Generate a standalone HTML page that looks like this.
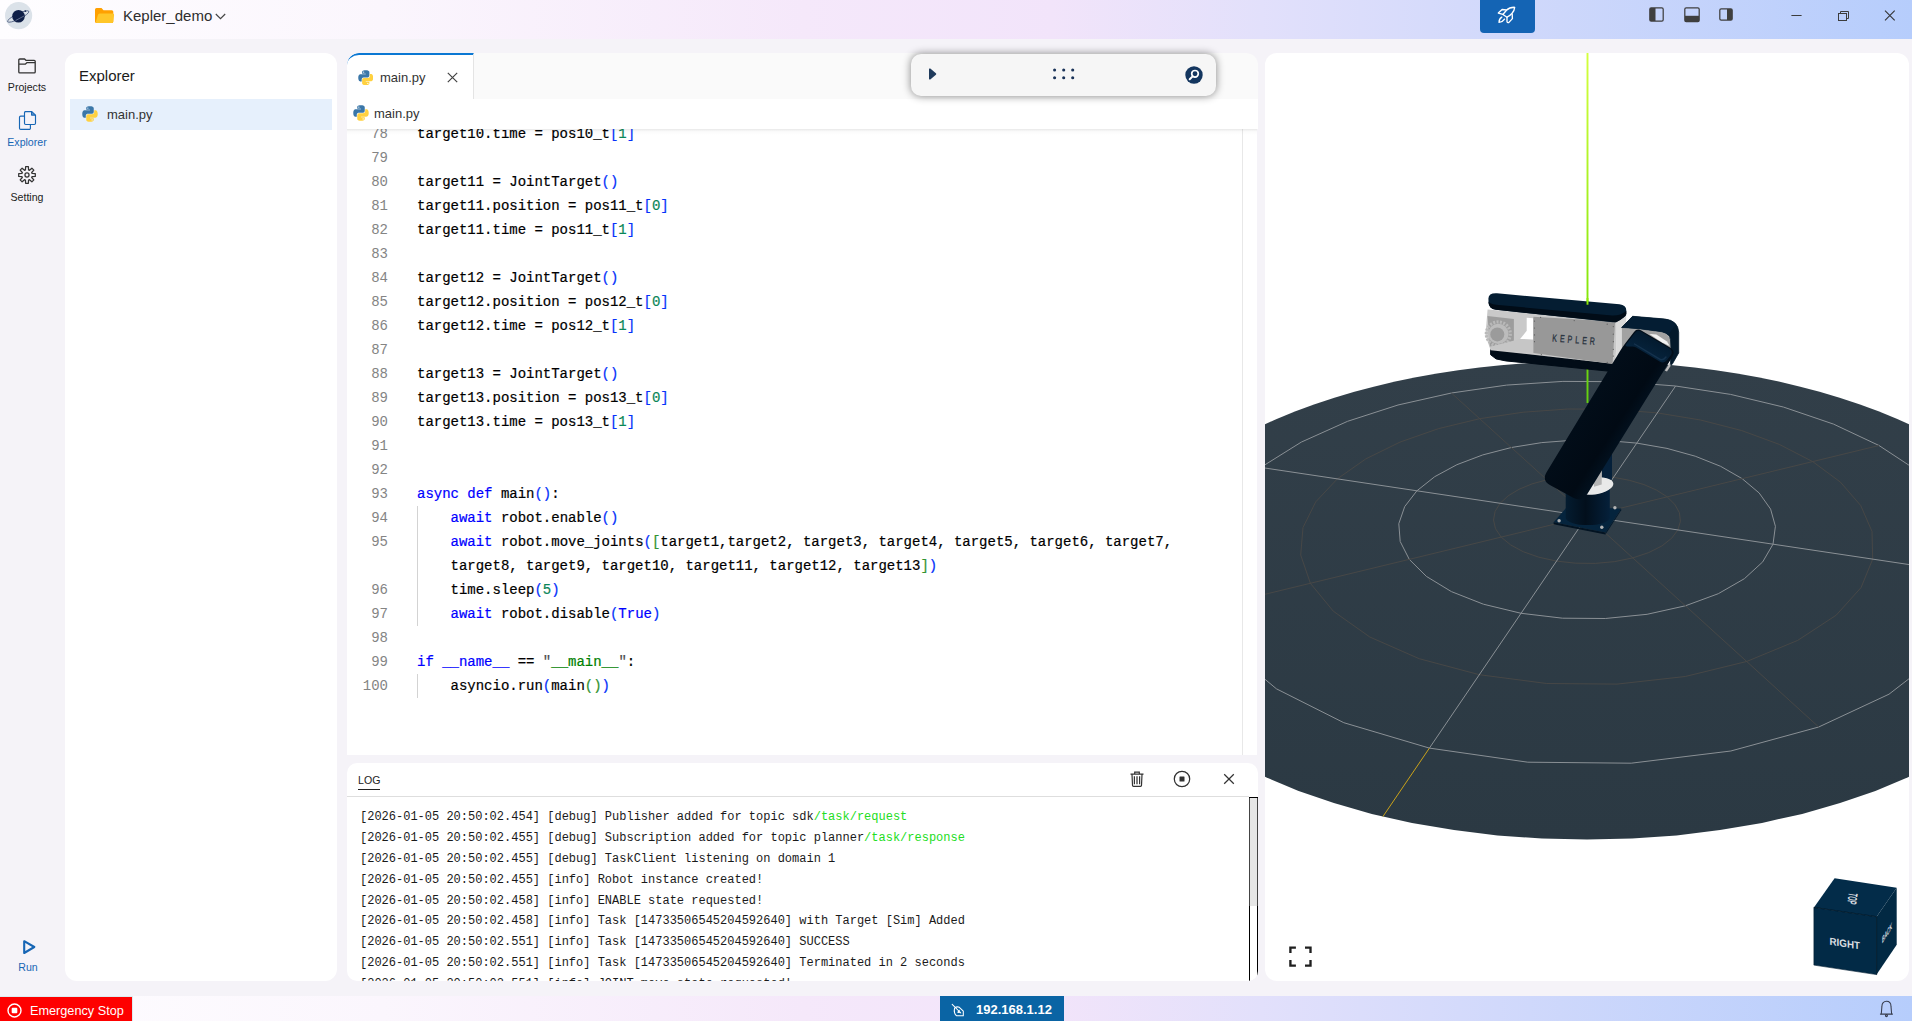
<!DOCTYPE html>
<html lang="en"><head><meta charset="utf-8"><title>Kepler_demo</title>
<style>
*{box-sizing:border-box;margin:0;padding:0}
html,body{width:1912px;height:1021px;overflow:hidden}
body{background:#f5f3f8;font-family:"Liberation Sans","DejaVu Sans",sans-serif;color:#222;position:relative}
svg{display:block}
.panel{position:absolute;background:#fff;overflow:hidden}
#titlebar{position:absolute;left:0;top:0;width:1912px;height:39px;
 background:linear-gradient(90deg,#fefdff 0%,#fbf6fd 20%,#f5e8fa 42%,#f2e4fa 55%,#e2e0fb 66%,#cfd8fb 80%,#b6cdfc 100%)}
#statusbar{position:absolute;left:0;top:996px;width:1912px;height:25px;
 background:linear-gradient(90deg,#fefdff 0%,#fbf6fd 20%,#f5e8fa 42%,#f2e4fa 55%,#e2e0fb 66%,#cfd8fb 80%,#b6cdfc 100%)}
#logo{position:absolute;left:5px;top:1.700px;width:28px;height:28px}
#proj{position:absolute;left:94px;top:0;height:32px}
#proj svg{position:absolute}
#projname{position:absolute;left:29px;top:7px;font-size:15px;color:#2e2e2e;white-space:nowrap}
#rocket{position:absolute;left:1480px;top:0;width:55px;height:33px;background:#1464b4;border-radius:0 0 4px 4px}
#rocket svg{position:absolute;left:17px;top:6px}
#layoutbtns svg,#winbtns svg{position:absolute}

#nav{position:absolute;left:0;top:0;width:65px;height:996px}
.ni{position:absolute;left:0;width:54px;color:#222}
.ni svg{margin:0 auto;position:relative}
.ni.act{color:#1766b5}
.nl{position:absolute;left:0;width:54px;text-align:center;font-size:10.600px;white-space:nowrap}

#side{left:65px;top:53px;width:272px;height:928px;border-radius:12px}
#sidehead{position:absolute;left:14px;top:14px;font-size:15px;color:#1b1b1b}
#siderow{position:absolute;left:5px;top:46px;width:262px;height:31px;background:#e6f0fc}
#siderow svg{position:absolute;left:12px;top:7px}
#siderow span{position:absolute;left:37px;top:8px;font-size:13px;color:#333}

#editor{left:347px;top:53px;width:911px;height:702px;border-radius:12px 12px 0 0;background:#f5f3f8}
#tabbar{position:absolute;left:0;top:0;width:911px;height:46px;background:#fafafa}
#tab{position:absolute;left:0;top:0;width:127px;height:46px;background:#fff;border-top:2px solid #0b78d3;border-right:1px solid #e4e4e4;border-top-left-radius:12px}
#tab svg{position:absolute}
.tabname{position:absolute;left:33px;top:15px;font-size:13px;color:#333}
#crumb{position:absolute;left:0;top:46px;width:911px;height:30px;background:#fff}
#crumb svg{position:absolute;left:6px;top:6px}
#crumb span{position:absolute;left:27px;top:7px;font-size:13px;color:#333}
#crumbshadow{position:absolute;left:0;top:76px;width:910px;height:6px;background:linear-gradient(180deg,rgba(0,0,0,.09),rgba(0,0,0,.02) 40%,rgba(0,0,0,0))}
#code{position:absolute;left:0;top:76px;width:910px;background:#fff;height:626px;overflow:hidden;font-family:"Liberation Mono","DejaVu Sans Mono",monospace;font-size:14px;color:#000;letter-spacing:-.012px;-webkit-text-stroke-width:.2px}
#ruler{position:absolute;left:895px;top:0;width:1px;height:626px;background:#e8e8e8}
.cl{position:absolute;left:0;height:24px;line-height:24px;white-space:pre;width:895px}
.ln{position:absolute;left:0;width:41px;text-align:right;color:#848484;-webkit-text-stroke-width:0}
.ct{position:absolute;left:70px}
.g{position:absolute;left:70px;top:0;width:1px;height:24px;background:#d3d3d3}
.k{color:#0000ff}.s{color:#008000}.q{color:#4d4d4d}.n{color:#098658}
.b1{color:#0431fa}.b2{color:#319331}.b3{color:#7b3814}

#floatbar{position:absolute;left:911px;top:54px;width:305px;height:42px;background:#f6f6f6;border-radius:10px;box-shadow:0 0 9px rgba(0,0,0,.48)}
#floatbar svg{position:absolute}

#log{left:347px;top:763px;width:911px;height:218px;border-radius:10px}
#loghead{position:absolute;left:0;top:0;width:902px;height:34px;border-bottom:1px solid #dedede}
#logtitle{position:absolute;left:11px;top:11px;font-size:10.6px;color:#222;border-bottom:1px solid #222;padding-bottom:3.200px}
#loghead svg{position:absolute}
#logbody{position:absolute;left:13px;top:44px;width:880px;font-family:"Liberation Mono","DejaVu Sans Mono",monospace;font-size:12px;color:#1a1a1a}
.ll{height:20.9px;line-height:20.9px;white-space:pre}
.lg{color:#22dd22}
#logscroll{position:absolute;left:902px;top:34px;width:9px;height:184px;border:1px solid #000;border-bottom:0;background:#fff}
#logthumb{position:absolute;left:-1px;top:0;width:9px;height:108px;background:#e6e6e6;border-left:1px solid #444;border-right:1px solid #444}

#viewer{left:1265px;top:53px;width:644px;height:928px;border-radius:12px}

#estop{position:absolute;left:0;top:0;width:133px;height:25px;background:#fe0000;color:#fff;border-top:1px solid #dcecef;border-right:1px solid #dcecef}
#estop svg{position:absolute;left:7px;top:5.800px}
#estop span{position:absolute;left:30px;top:7.400px;font-size:12.700px;white-space:nowrap}
#ip{position:absolute;left:940px;top:0;width:124px;height:25px;background:#0a64a4;color:#fff}
#ip svg{position:absolute;left:11px;top:7px}
#ip span{position:absolute;left:36px;top:6px;font-size:13px;font-weight:bold;white-space:nowrap}
#bell{position:absolute;left:1878px;top:3px}

</style></head>
<body>
<div id="titlebar">
  <div id="logo"><svg width="28" height="28" viewBox="0 0 28 28"><circle cx="13.600" cy="13.600" r="13.600" fill="#dbe2e9"/><ellipse cx="13.200" cy="14.500" rx="11.800" ry="2.700" fill="none" stroke="#46557a" stroke-width=".75" transform="rotate(-26 13.200 14.500)"/><circle cx="13.500" cy="14.300" r="6.300" fill="#0f1f47"/><path d="M10.600 18.500L19 14" stroke="#7f8aa6" stroke-width=".7" fill="none"/><circle cx="20.300" cy="9.100" r=".9" fill="#1a2a52"/></svg></div>
  <div id="proj"><svg width="20" height="16" viewBox="0 0 20 16" style="left:1px;top:8px"><path d="M1.500 0h5l2 2.200h8.300a1.500 1.500 0 0 1 1.500 1.500v9.800a1.500 1.500 0 0 1-1.500 1.500H1.500A1.500 1.500 0 0 1 0 13.500v-12A1.500 1.500 0 0 1 1.500 0z" fill="#ffa000"/><path d="M4.800 5.400H17.800a1.300 1.300 0 0 1 1.300 1.500L18.200 13.700a1.500 1.500 0 0 1-1.500 1.300H2.200a1.300 1.300 0 0 1-1.300-1.500L2.900 6.900a1.900 1.900 0 0 1 1.900-1.500z" fill="#ffc629"/></svg><span id="projname">Kepler_demo</span><svg width="11" height="7" viewBox="0 0 11 7" style="left:121px;top:13px"><path d="M.8 1l4.700 4.600L10.200 1" fill="none" stroke="#444" stroke-width="1.2"/></svg></div>
  <div id="rocket"><svg width="19" height="18" viewBox="0 0 19 18"><g fill="none" stroke="#fff" stroke-width="1.350" stroke-linejoin="round" stroke-linecap="round"><path d="M17.700 1.300C14 1.200 11.500 2.200 9.450 4.300L5.900 8.450 10 11.200C13 9.800 17.500 6 17.700 1.300Z"/><path d="M9.300 3.800L5.100 3.500 1.300 7.100 5.900 8.450"/><path d="M10 11.200V15.600Q10.300 16.900 11.700 16.600L15.400 12.600 15.200 8.300"/><path d="M4.800 11.200C2.600 12.500 2 14.500 2.050 16.400 4 16.200 6.300 15 7.500 13.100"/></g></svg></div>
  <div id="layoutbtns"><svg width="15" height="15" viewBox="0 0 15 15" style="left:1649px;top:7px"><rect x=".8" y=".8" width="13.4" height="13.4" rx="1.400" fill="none" stroke="#3f3f3f" stroke-width="1.250"/><rect x="1" y="1" width="5.5" height="13" fill="#3f3f3f"/></svg><svg width="16" height="15.5" viewBox="0 0 16 15.5" style="left:1683.5px;top:7px"><rect x=".8" y=".8" width="14.4" height="13.9" rx="1.400" fill="none" stroke="#3f3f3f" stroke-width="1.250"/><rect x="1" y="8.8" width="14" height="6" fill="#3f3f3f"/></svg><svg width="14" height="13" viewBox="0 0 14 13" style="left:1719px;top:8px"><rect x=".8" y=".8" width="12.4" height="11.4" rx="1.400" fill="none" stroke="#3f3f3f" stroke-width="1.250"/><rect x="8" y="1" width="5" height="11" fill="#3f3f3f"/></svg></div>
  <div id="winbtns"><svg width="12" height="3" viewBox="0 0 12 3" style="left:1791px;top:14px"><path d="M.4 1.500h10.200" stroke="#3c3c3c" stroke-width="1"/></svg><svg width="13" height="12" viewBox="0 0 13 12" style="left:1837px;top:10px"><g fill="none" stroke="#3c3c3c" stroke-width="1"><rect x="1.500" y="3.500" width="8" height="7"/><path d="M3.500 3.500v-2h8v7h-2"/></g></svg><svg width="12" height="12" viewBox="0 0 12 12" style="left:1884px;top:10px"><path d="M1 .700l9.700 9.700M10.700.7L1 10.400" stroke="#333" stroke-width="1.100"/></svg></div>
</div>

<div id="nav">
  <div class="ni" style="top:58px"><svg width="18" height="16" viewBox="0 0 18 16" style="left:0px"><path d="M1.800 1h4.800l1.300 1.300h8.300a1 1 0 0 1 1 1v10.600a1 1 0 0 1-1 1H1.800a1 1 0 0 1-1-1V2a1 1 0 0 1 1-1zM.8 6.200h6.400l1.900-1.600h8" fill="none" stroke="#333" stroke-width="1.300" stroke-linejoin="round"/></svg><span class="nl" style="top:22.500px">Projects</span></div>
  <div class="ni act" style="top:111px"><svg width="19" height="19" viewBox="0 0 19 19" style="left:.5px"><path d="M13.600.700v3.400h3.600z" fill="#6fa3d6"/><g fill="none" stroke="#1766b5" stroke-width="1.150" stroke-linejoin="round"><path d="M7.700.550h6.100l3.700 3.600v8.100a1.200 1.200 0 0 1-1.200 1.200H7.700a1.200 1.200 0 0 1-1.200-1.200V1.750A1.200 1.200 0 0 1 7.700.55z"/><path d="M13.600.800v3.300h3.700"/><path d="M6.400 5.150H2.700A1.200 1.200 0 0 0 1.500 6.350v10.850a1.200 1.200 0 0 0 1.200 1.200h8.500a1.200 1.200 0 0 0 1.200-1.200V13.600"/></g></svg><span class="nl" style="top:24.500px">Explorer</span></div>
  <div class="ni" style="top:166px"><svg width="18" height="18" viewBox="0 0 18 18"><path d="M7.62 0.71 L10.38 0.71 L10.57 3.94 L11.47 4.31 L13.88 2.17 L15.83 4.12 L13.69 6.53 L14.06 7.43 L17.29 7.62 L17.29 10.38 L14.06 10.57 L13.69 11.47 L15.83 13.88 L13.88 15.83 L11.47 13.69 L10.57 14.06 L10.38 17.29 L7.62 17.29 L7.43 14.06 L6.53 13.69 L4.12 15.83 L2.17 13.88 L4.31 11.47 L3.94 10.57 L0.71 10.38 L0.71 7.62 L3.94 7.43 L4.31 6.53 L2.17 4.12 L4.12 2.17 L6.53 4.31 L7.43 3.94Z" fill="none" stroke="#333" stroke-width="1.250" stroke-linejoin="round"/><circle cx="9" cy="9" r="2.050" fill="none" stroke="#333" stroke-width="1.250"/></svg><span class="nl" style="top:25px">Setting</span></div>
  <div class="ni act" style="top:939px"><svg width="15" height="16" viewBox="0 0 15 16" style="left:2px"><path d="M2.200 2.200L12.300 8 2.200 14z" fill="none" stroke="#1766b5" stroke-width="2.100" stroke-linejoin="round"/></svg><span class="nl" style="top:22px;left:1px">Run</span></div>
</div>

<div id="side" class="panel">
  <div id="sidehead">Explorer</div>
  <div id="siderow"><svg width="16" height="16" viewBox="1.5 1.5 29 29" style=""><path fill="#3b77a8" d="M15.9 2c-7.1 0-6.7 3.1-6.7 3.1v3.2h6.800v1H6.500S2 8.800 2 15.900s4 6.900 4 6.900h2.400v-3.300s-.1-4 3.900-4h6.700s3.800.1 3.800-3.700V5.700S23.400 2 15.900 2zm-3.800 2.100a1.200 1.200 0 1 1 0 2.400 1.200 1.200 0 0 1 0-2.400z"/><path fill="#ffd140" d="M16.100 30c7.100 0 6.700-3.100 6.700-3.100v-3.200H16v-1h9.500s4.500.5 4.500-6.600-4-6.900-4-6.900h-2.400v3.300s.1 4-3.900 4h-6.700s-3.800-.1-3.800 3.700v6.100S8.600 30 16.100 30zm3.800-2.100a1.200 1.200 0 1 1 0-2.400 1.200 1.200 0 0 1 0 2.400z"/></svg><span>main.py</span></div>
</div>

<div id="editor" class="panel">
  <div id="tabbar">
    <div id="tab"><svg width="15.5" height="15.5" viewBox="1.5 1.5 29 29" style="left:10.500px;top:14.500px"><path fill="#3b77a8" d="M15.9 2c-7.1 0-6.7 3.1-6.7 3.1v3.2h6.800v1H6.500S2 8.800 2 15.900s4 6.900 4 6.900h2.400v-3.300s-.1-4 3.900-4h6.700s3.800.1 3.800-3.700V5.700S23.400 2 15.900 2zm-3.800 2.100a1.200 1.200 0 1 1 0 2.400 1.200 1.200 0 0 1 0-2.400z"/><path fill="#ffd140" d="M16.100 30c7.100 0 6.700-3.100 6.700-3.100v-3.200H16v-1h9.500s4.500.5 4.500-6.600-4-6.900-4-6.900h-2.400v3.300s.1 4-3.900 4h-6.700s-3.800-.1-3.800 3.700v6.100S8.600 30 16.100 30zm3.800-2.100a1.200 1.200 0 1 1 0-2.400 1.200 1.200 0 0 1 0 2.400z"/></svg><span class="tabname">main.py</span><svg width="11" height="11" viewBox="0 0 11 11" style="left:99.500px;top:16.500px"><path d="M.8.800l9.400 9.400M10.200.8L.8 10.200" stroke="#444" stroke-width="1.200"/></svg></div>
  </div>
  <div id="crumb"><svg width="16" height="16" viewBox="1.5 1.5 29 29" style=""><path fill="#3b77a8" d="M15.9 2c-7.1 0-6.7 3.1-6.7 3.1v3.2h6.800v1H6.500S2 8.800 2 15.900s4 6.900 4 6.900h2.400v-3.300s-.1-4 3.900-4h6.700s3.800.1 3.800-3.700V5.700S23.400 2 15.900 2zm-3.800 2.100a1.200 1.200 0 1 1 0 2.400 1.200 1.200 0 0 1 0-2.400z"/><path fill="#ffd140" d="M16.100 30c7.100 0 6.700-3.100 6.700-3.100v-3.200H16v-1h9.500s4.500.5 4.500-6.600-4-6.900-4-6.900h-2.400v3.300s.1 4-3.900 4h-6.700s-3.800-.1-3.800 3.700v6.100S8.600 30 16.100 30zm3.800-2.100a1.200 1.200 0 1 1 0-2.400 1.200 1.200 0 0 1 0 2.400z"/></svg><span>main.py</span></div>
  <div id="code">
    <div id="ruler"></div>
<div class="cl" style="top:-7px"><span class="ln">78</span><span class="ct">target10.time = pos10_t<span class="b1">[</span><span class="n">1</span><span class="b1">]</span></span></div>
<div class="cl" style="top:17px"><span class="ln">79</span><span class="ct"></span></div>
<div class="cl" style="top:41px"><span class="ln">80</span><span class="ct">target11 = JointTarget<span class="b1">(</span><span class="b1">)</span></span></div>
<div class="cl" style="top:65px"><span class="ln">81</span><span class="ct">target11.position = pos11_t<span class="b1">[</span><span class="n">0</span><span class="b1">]</span></span></div>
<div class="cl" style="top:89px"><span class="ln">82</span><span class="ct">target11.time = pos11_t<span class="b1">[</span><span class="n">1</span><span class="b1">]</span></span></div>
<div class="cl" style="top:113px"><span class="ln">83</span><span class="ct"></span></div>
<div class="cl" style="top:137px"><span class="ln">84</span><span class="ct">target12 = JointTarget<span class="b1">(</span><span class="b1">)</span></span></div>
<div class="cl" style="top:161px"><span class="ln">85</span><span class="ct">target12.position = pos12_t<span class="b1">[</span><span class="n">0</span><span class="b1">]</span></span></div>
<div class="cl" style="top:185px"><span class="ln">86</span><span class="ct">target12.time = pos12_t<span class="b1">[</span><span class="n">1</span><span class="b1">]</span></span></div>
<div class="cl" style="top:209px"><span class="ln">87</span><span class="ct"></span></div>
<div class="cl" style="top:233px"><span class="ln">88</span><span class="ct">target13 = JointTarget<span class="b1">(</span><span class="b1">)</span></span></div>
<div class="cl" style="top:257px"><span class="ln">89</span><span class="ct">target13.position = pos13_t<span class="b1">[</span><span class="n">0</span><span class="b1">]</span></span></div>
<div class="cl" style="top:281px"><span class="ln">90</span><span class="ct">target13.time = pos13_t<span class="b1">[</span><span class="n">1</span><span class="b1">]</span></span></div>
<div class="cl" style="top:305px"><span class="ln">91</span><span class="ct"></span></div>
<div class="cl" style="top:329px"><span class="ln">92</span><span class="ct"></span></div>
<div class="cl" style="top:353px"><span class="ln">93</span><span class="ct"><span class="k">async</span> <span class="k">def</span> main<span class="b1">(</span><span class="b1">)</span>:</span></div>
<div class="cl" style="top:377px"><span class="ln">94</span><i class="g"></i><span class="ct">    <span class="k">await</span> robot.enable<span class="b1">(</span><span class="b1">)</span></span></div>
<div class="cl" style="top:401px"><span class="ln">95</span><i class="g"></i><span class="ct">    <span class="k">await</span> robot.move_joints<span class="b1">(</span><span class="b2">[</span>target1,target2, target3, target4, target5, target6, target7,</span></div>
<div class="cl" style="top:425px"><i class="g"></i><span class="ct">    target8, target9, target10, target11, target12, target13<span class="b2">]</span><span class="b1">)</span></span></div>
<div class="cl" style="top:449px"><span class="ln">96</span><i class="g"></i><span class="ct">    time.sleep<span class="b1">(</span><span class="n">5</span><span class="b1">)</span></span></div>
<div class="cl" style="top:473px"><span class="ln">97</span><i class="g"></i><span class="ct">    <span class="k">await</span> robot.disable<span class="b1">(</span><span class="k">True</span><span class="b1">)</span></span></div>
<div class="cl" style="top:497px"><span class="ln">98</span><span class="ct"></span></div>
<div class="cl" style="top:521px"><span class="ln">99</span><span class="ct"><span class="k">if</span> <span class="k">__name__</span> == <span class="q">"</span><span class="s">__main__</span><span class="q">"</span>:</span></div>
<div class="cl" style="top:545px"><span class="ln">100</span><i class="g"></i><span class="ct">    asyncio.run<span class="b1">(</span>main<span class="b2">(</span><span class="b2">)</span><span class="b1">)</span></span></div>

  </div>
  <div id="crumbshadow"></div>
</div>

<div id="floatbar"><svg width="9" height="12" viewBox="0 0 9 12" style="left:17px;top:13.900px"><path d="M1 1.200a.8.800 0 0 1 1.300-.6l5.600 4.700a.9.900 0 0 1 0 1.400L2.300 11.400A.8.800 0 0 1 1 10.800z" fill="#203b5c"/></svg><svg width="24" height="14" viewBox="0 0 24 14" style="left:141px;top:13.400px"><g fill="#1a3358"><circle cx="2.6" cy="3" r="1.550"/><circle cx="2.6" cy="10.8" r="1.550"/><circle cx="11.7" cy="3" r="1.550"/><circle cx="11.7" cy="10.8" r="1.550"/><circle cx="20.7" cy="3" r="1.550"/><circle cx="20.7" cy="10.8" r="1.550"/></g></svg><svg width="18" height="18" viewBox="0 0 18 18" style="left:273.800px;top:11.700px"><circle cx="9" cy="9" r="8.700" fill="#14365f"/><circle cx="10" cy="7.800" r="3.300" fill="none" stroke="#fff" stroke-width="1.700"/><path d="M7.600 10.400L4.700 13.300" stroke="#fff" stroke-width="2" stroke-linecap="round"/></svg></div>

<div id="log" class="panel">
  <div id="loghead"><span id="logtitle">LOG</span><svg width="14" height="16" viewBox="0 0 14 16" style="left:783px;top:8px"><g fill="none" stroke="#333" stroke-width="1.200"><path d="M.5 3.200h13M4.700 3V1.200h4.600V3M2 3.400l.5 10.900a1 1 0 0 0 1 1h7a1 1 0 0 0 1-1L12 3.400"/><path d="M4.400 5.300v8M7 5.300v8M9.600 5.300v8" stroke-width="1.250"/></g></svg><svg width="18" height="18" viewBox="0 0 18 18" style="left:825.500px;top:7.400px"><circle cx="9" cy="9" r="7.700" fill="none" stroke="#333" stroke-width="1.250"/><rect x="6.500" y="6.500" width="5" height="5" rx=".5" fill="#333"/></svg><svg width="12" height="12" viewBox="0 0 12 12" style="left:876.200px;top:10px"><path d="M1.200 1.200l9.600 9.600M10.800 1.200L1.200 10.800" stroke="#333" stroke-width="1.250"/></svg></div>
  <div id="logbody">
<div class="ll">[2026-01-05 20:50:02.454] [debug] Publisher added for topic sdk<span class="lg">/task/request</span></div>
<div class="ll">[2026-01-05 20:50:02.455] [debug] Subscription added for topic planner<span class="lg">/task/response</span></div>
<div class="ll">[2026-01-05 20:50:02.455] [debug] TaskClient listening on domain 1</div>
<div class="ll">[2026-01-05 20:50:02.455] [info] Robot instance created!</div>
<div class="ll">[2026-01-05 20:50:02.458] [info] ENABLE state requested!</div>
<div class="ll">[2026-01-05 20:50:02.458] [info] Task [14733506545204592640] with Target [Sim] Added</div>
<div class="ll">[2026-01-05 20:50:02.551] [info] Task [14733506545204592640] SUCCESS</div>
<div class="ll">[2026-01-05 20:50:02.551] [info] Task [14733506545204592640] Terminated in 2 seconds</div>
<div class="ll">[2026-01-05 20:50:02.551] [info] JOINT_move state requested!</div>

  </div>
  <div id="logscroll"><div id="logthumb"></div></div>
</div>

<div id="viewer" class="panel">
<svg width="644" height="928" viewBox="1265 53 644 928" style="position:absolute;left:0;top:0">
<defs><linearGradient id="dg" x1="0" x2="0" y1="0" y2="1"><stop offset="0" stop-color="#323f49"/><stop offset="1" stop-color="#2b3943"/></linearGradient><linearGradient id="gr" gradientUnits="userSpaceOnUse" x1="0" y1="53" x2="0" y2="403"><stop offset="0" stop-color="#d4ff3e"/><stop offset=".7" stop-color="#84e60a"/><stop offset="1" stop-color="#62d010"/></linearGradient></defs>
<path d="M2033.2 516.3 L2042.7 530.3 L2050.7 545.0 L2056.9 560.2 L2061.2 576.0 L2063.4 592.2 L2063.4 608.9 L2061.0 626.0 L2056.0 643.4 L2048.2 661.0 L2037.6 678.6 L2023.9 696.2 L2007.1 713.5 L1987.1 730.5 L1963.9 746.9 L1937.5 762.6 L1908.0 777.3 L1875.4 790.9 L1840.1 803.1 L1802.2 813.9 L1762.0 822.9 L1720.0 830.1 L1676.5 835.4 L1632.0 838.5 L1587.0 839.6 L1542.0 838.5 L1497.5 835.4 L1454.0 830.1 L1412.0 822.9 L1371.8 813.9 L1333.9 803.1 L1298.6 790.9 L1266.0 777.3 L1236.5 762.6 L1210.1 746.9 L1186.9 730.5 L1166.9 713.5 L1150.1 696.2 L1136.4 678.6 L1125.8 661.0 L1118.0 643.4 L1113.0 626.0 L1110.6 608.9 L1110.6 592.2 L1112.8 576.0 L1117.1 560.2 L1123.3 545.0 L1131.3 530.3 L1140.8 516.3 L1151.8 502.9 L1164.1 490.2 L1177.5 478.1 L1192.0 466.6 L1207.4 455.8 L1223.7 445.7 L1240.7 436.1 L1258.4 427.2 L1276.7 419.0 L1295.5 411.3 L1314.7 404.2 L1334.4 397.7 L1354.4 391.8 L1374.7 386.4 L1395.2 381.6 L1416.0 377.3 L1437.0 373.5 L1458.2 370.3 L1479.4 367.5 L1500.8 365.3 L1522.3 363.6 L1543.8 362.4 L1565.4 361.6 L1587.0 361.4 L1608.6 361.6 L1630.2 362.4 L1651.7 363.6 L1673.2 365.3 L1694.6 367.5 L1715.8 370.3 L1737.0 373.5 L1758.0 377.3 L1778.8 381.6 L1799.3 386.4 L1819.6 391.8 L1839.6 397.7 L1859.3 404.2 L1878.5 411.3 L1897.3 419.0 L1915.6 427.2 L1933.3 436.1 L1950.3 445.7 L1966.6 455.8 L1982.0 466.6 L1996.5 478.1 L2009.9 490.2 L2022.2 502.9Z" fill="url(#dg)"/>
<path d="M1677.9 529.9 L1671.6 538.3 L1661.8 546.0 L1648.7 552.6 L1632.8 557.9 L1614.7 561.6 L1595.4 563.4 L1575.7 563.2 L1556.5 561.1 L1538.8 557.2 L1523.2 551.7 L1510.6 544.9 L1501.2 537.1 L1495.5 528.7 L1493.5 520.0 L1495.1 511.4 L1500.1 503.3 L1508.2 495.8 L1519.0 489.3 L1532.0 483.9 L1546.9 479.8 L1562.9 477.0 L1579.7 475.7 L1596.8 475.8 L1613.5 477.3 L1629.4 480.3 L1644.0 484.6 L1656.7 490.2 L1667.2 496.9 L1674.8 504.4 L1679.4 512.7 L1680.4 521.3Z" fill="none" stroke="#4a4846" stroke-width="0.9"/>
<path d="M1773.0 544.2 L1762.7 561.9 L1744.4 578.7 L1718.3 593.7 L1685.4 605.8 L1647.1 614.3 L1605.3 618.5 L1562.5 618.2 L1521.1 613.3 L1483.4 604.2 L1451.4 591.6 L1426.4 576.4 L1409.3 559.4 L1400.2 541.5 L1398.8 523.7 L1404.7 506.6 L1416.9 490.8 L1434.7 476.7 L1456.9 464.7 L1482.8 454.9 L1511.4 447.5 L1541.8 442.6 L1573.4 440.2 L1605.3 440.4 L1636.7 443.1 L1667.0 448.4 L1695.2 456.2 L1720.6 466.3 L1742.2 478.7 L1759.2 493.0 L1770.6 509.1 L1775.4 526.3Z" fill="none" stroke="#8a9095" stroke-width="1"/>
<path d="M1872.7 559.1 L1861.1 587.5 L1836.2 615.2 L1797.7 640.4 L1746.6 661.5 L1685.2 676.5 L1617.0 684.1 L1546.7 683.5 L1479.3 674.7 L1419.2 658.7 L1369.8 637.0 L1333.3 611.2 L1310.4 583.3 L1300.7 555.0 L1303.0 527.5 L1315.7 501.9 L1337.3 478.9 L1365.8 458.9 L1400.0 442.1 L1438.3 428.7 L1479.7 418.7 L1523.2 412.2 L1567.8 409.0 L1612.8 409.3 L1657.3 412.9 L1700.5 420.0 L1741.5 430.5 L1779.3 444.4 L1812.7 461.6 L1840.4 482.1 L1860.7 505.5 L1872.0 531.4Z" fill="none" stroke="#4a4846" stroke-width="0.9"/>
<path d="M1977.3 574.8 L1967.6 615.1 L1938.7 655.8 L1889.0 694.2 L1818.7 727.0 L1730.8 751.0 L1631.2 763.2 L1527.8 762.2 L1429.4 748.1 L1343.8 722.7 L1276.4 688.8 L1229.8 649.9 L1203.8 609.1 L1196.8 569.0 L1205.9 531.3 L1228.2 497.3 L1260.8 467.4 L1301.3 442.1 L1347.6 421.3 L1398.0 405.0 L1451.4 393.0 L1506.6 385.1 L1562.9 381.4 L1619.4 381.7 L1675.6 386.0 L1730.6 394.4 L1783.6 407.1 L1833.5 424.1 L1879.0 445.5 L1918.5 471.5 L1949.8 502.0 L1970.3 536.6Z" fill="none" stroke="#8a9095" stroke-width="1"/>
<path d="M1587.0 516.3L1977.3 574.8" stroke="#8a9095" stroke-width="1"/>
<path d="M1587.0 516.3L1818.7 727.0" stroke="#4a4846" stroke-width="0.9"/>
<path d="M1587.0 516.3L1429.4 748.1" stroke="#8a9095" stroke-width="1"/>
<path d="M1587.0 516.3L1203.8 609.1" stroke="#4a4846" stroke-width="0.9"/>
<path d="M1587.0 516.3L1260.8 467.4" stroke="#8a9095" stroke-width="1"/>
<path d="M1587.0 516.3L1451.4 393.0" stroke="#4a4846" stroke-width="0.9"/>
<path d="M1587.0 516.3L1675.6 386.0" stroke="#8a9095" stroke-width="1"/>
<path d="M1587.0 516.3L1879.0 445.5" stroke="#4a4846" stroke-width="0.9"/>
<path d="M1429.4 748.1L1382.9 816.6" stroke="#c9a21a" stroke-width="1"/>
<path d="M1587.500 53V403" stroke="url(#gr)" stroke-width="1.900"/>
<path d="M1553.6 522.3 L1566.9 507.0 L1621.2 508.4 L1605.5 532.5Z" fill="#05243d"/>
<path d="M1553.6 522.3 L1605.5 532.5 L1605.5 534.5 L1553.6 524.3Z" fill="#021322"/>
<path d="M1605.5 532.5 L1621.2 508.4 L1621.2 510.2 L1605.5 534.5Z" fill="#031a2d"/>
<defs><linearGradient id="col" x1="0" x2="1"><stop offset="0" stop-color="#041c30"/><stop offset=".45" stop-color="#020f1c"/><stop offset="1" stop-color="#05203a"/></linearGradient></defs>
<path d="M1565.7 488.2V517.6A22.0 7.500 0 0 0 1609.8 517.6V488.2Z" fill="url(#col)"/>
<path d="M1601.4 451.4 L1612.0 448.5 L1612.0 479.4 L1601.4 482.3Z" fill="#05203a"/>
<path d="M1594.0 469.1 L1601.7 464.7 L1601.7 486.7 L1594.0 486.7Z" fill="#b4b4b4"/>
<ellipse cx="1594.0" cy="486.0" rx="19.500" ry="8.500" fill="#e9e9e9" transform="rotate(-8 1594.0 486.0)"/>
<path d="M1594.0 469.1 L1601.7 464.7 L1601.7 484.5 L1594.0 486.7Z" fill="#b4b4b4"/>
<circle cx="1559.1" cy="520.8" r="1.700" fill="#b4b4b4"/>
<circle cx="1614.9" cy="507.7" r="1.700" fill="#b4b4b4"/>
<circle cx="1601.8" cy="527.3" r="1.700" fill="#b4b4b4"/>
<path d="M1490.6 349.3 L1612.6 363.9 L1612.6 371.6 L1605.1 370.8 L1505.7 360.9 L1496.1 358.9 L1490.6 354.7Z" fill="#010c17" stroke="#010c17" stroke-width="1" stroke-linejoin="round"/>
<path d="M1487.6 309.5 L1617.4 320.5 L1615.4 363.9 L1490.6 350.2 L1485.4 334.9Z" fill="#c9c9c9"/>
<path d="M1487.5 316.0 L1513.9 318.9 L1513.9 345.7 L1489.9 346.7Z" fill="#9d9d9d"/>
<circle cx="1498.3" cy="333.9" r="12" fill="none" stroke="#b9b9b9" stroke-width="3.200" stroke-dasharray="2 1.400"/>
<circle cx="1498.3" cy="333.9" r="10.200" fill="#bcbcbc"/>
<circle cx="1497.3" cy="334.4" r="7" fill="#9b9b9b"/>
<path d="M1526.7 317.8 L1533.1 318.3 L1533.1 339.8 L1520.1 339.0 L1526.7 330.8Z" fill="#ffffff"/>
<path d="M1489.9 346.7 L1520.1 339.0 L1533.1 339.8 L1533.1 352.9 L1490.4 348.7Z" fill="#c6c6c6"/>
<path d="M1533.4 316.8 L1615.1 321.6 L1612.6 363.9 L1533.4 353.1Z" fill="#989898"/>
<circle cx="1534.5" cy="321.1" r=".6" fill="#5c5c5c"/>
<circle cx="1534.5" cy="328.0" r=".6" fill="#5c5c5c"/>
<circle cx="1534.5" cy="334.9" r=".6" fill="#5c5c5c"/>
<circle cx="1534.5" cy="341.7" r=".6" fill="#5c5c5c"/>
<circle cx="1613.3" cy="326.6" r=".6" fill="#5c5c5c"/>
<circle cx="1613.3" cy="334.2" r=".6" fill="#5c5c5c"/>
<circle cx="1613.3" cy="341.7" r=".6" fill="#5c5c5c"/>
<circle cx="1613.3" cy="349.3" r=".6" fill="#5c5c5c"/>
<circle cx="1613.3" cy="356.1" r=".6" fill="#5c5c5c"/>
<circle cx="1540.6" cy="317.3" r=".6" fill="#5c5c5c"/>
<circle cx="1574.2" cy="320.6" r=".6" fill="#5c5c5c"/>
<circle cx="1607.2" cy="324.2" r=".6" fill="#5c5c5c"/>
<circle cx="1541.3" cy="354.7" r=".6" fill="#5c5c5c"/>
<circle cx="1574.2" cy="359.6" r=".6" fill="#5c5c5c"/>
<circle cx="1607.2" cy="362.3" r=".6" fill="#5c5c5c"/>
<text transform="translate(1552.0 341.5) rotate(4.600) scale(.68 1)" font-family="Liberation Sans, sans-serif" font-size="10.400" fill="#27313d" stroke="#27313d" stroke-width=".3" textLength="63" lengthAdjust="spacing">KEPLER</text>
<path d="M1616.1 322.5 L1626.2 314.1 L1626.2 326.5 L1621.8 328.4 L1621.8 350.7 L1616.1 357.3Z" fill="#dadada"/>
<path d="M1621.8 328.0 L1638.8 328.9 L1665.3 332.5 L1670.7 338.8 L1671.1 349.4 L1621.8 350.7Z" fill="#a2a2a2"/>
<path d="M1649.4 334.0 L1656.4 334.6 L1667.0 341.4 L1669.7 345.9 L1661.7 342.3Z" fill="#f2f2f2"/>
<path d="M1488.400 298.500Q1488.600 292.800 1497 293.300L1619.500 304.300Q1626.300 305.200 1626.300 310.500V314Q1626 317 1616 322.300L1613 322.300 1496 309.800Q1488.800 308.500 1488.600 303Z" fill="#041d32"/>
<path d="M1488.600 301.500Q1489.500 304 1496 304.800L1612 315.500Q1620 316 1626.300 311V314Q1626 317 1616 322.300L1496 309.800Q1488.800 308.500 1488.600 303Z" fill="#010c17"/>
<path d="M1587.500 298V304.700" stroke="#8fe808" stroke-width="1.900"/>
<path d="M1621.6 327.5 L1632.6 316.3 L1664.8 319.0 Q1678.0 320.5 1678.7 332.2 L1678.7 352.9 L1672.5 363.7 L1670.4 366.0 L1671.0 348.1 L1670.5 339.7 Q1669.8 333.5 1661.7 331.7 L1638.8 328.7 Z" fill="#03192b" stroke="#03192b" stroke-width=".8" stroke-linejoin="round"/>
<path d="M1621.6 327.5 L1632.6 316.3 L1664.8 319.0 Q1672.3 319.8 1675.8 324.7 L1667.9 335.3 Q1667.0 333.1 1661.7 331.7 L1638.8 328.7 Z" fill="#041d33"/>
<path d="M1664.8 370.5 L1669.8 362.8 L1670.7 365.7 L1667.0 371.6Z" fill="#bdbdbd"/>
<defs><linearGradient id="arm" gradientUnits="userSpaceOnUse" x1="1572" y1="392" x2="1630" y2="430"><stop offset="0" stop-color="#06213a"/><stop offset=".16" stop-color="#020e1a"/><stop offset=".8" stop-color="#010a14"/><stop offset="1" stop-color="#02111f"/></linearGradient><linearGradient id="cap" gradientUnits="userSpaceOnUse" x1="1642" y1="332" x2="1632" y2="352"><stop offset="0" stop-color="#031a2e"/><stop offset="1" stop-color="#07253f"/></linearGradient></defs>
<path d="M1619.9 351.3Q1622.5 347.0 1625.5 343.0L1634.0 332.0Q1637.0 328.0 1641.3 330.5L1670.0 347.4Q1676.0 351.0 1672.3 356.9L1587.3 494.0Q1582.0 502.5 1573.2 497.7L1550.3 485.3Q1541.5 480.5 1546.7 472.0Z" fill="url(#arm)"/>
<path d="M1627.5 346.5Q1624.5 346.5 1626.3 344.1L1635.1 332.7Q1637.5 329.5 1640.9 331.5L1668.8 348.0Q1674.0 351.0 1670.3 355.8L1667.0 360.0Q1664.0 364.0 1659.7 361.4L1636.2 347.5Q1634.5 346.5 1632.5 346.5Z" fill="url(#cap)"/>
<path d="M1634.500 344L1660.500 359.500Q1663.500 360.500 1666 357" fill="none" stroke="#1c3b57" stroke-width="1.400" stroke-linecap="round" opacity=".7"/>
<path d="M1813.9 907.4 L1876.6 916.7 L1876.6 974.6 L1813.9 965.1Z" fill="#022a46"/>
<path d="M1813.9 907.4 L1834.6 878.2 L1896.7 887.8 L1876.6 916.7Z" fill="#032c49"/>
<path d="M1876.6 916.7 L1896.7 887.8 L1896.7 944.7 L1876.6 974.6Z" fill="#022943"/>
<path d="M1813.9 907.4 L1876.6 916.7 L1876.6 974.6 L1813.9 965.1Z" fill="none" stroke="#011c30" stroke-width=".6"/>
<path d="M1813.9 907.4 L1876.6 916.7 L1876.6 974.6" fill="none" stroke="#011a2c" stroke-width=".8"/>
<text transform="matrix(1 .148 0 1 1829.500 944.800)" font-family="Liberation Sans, sans-serif" font-weight="bold" font-size="10.500" fill="#d9dde0" textLength="30.500" lengthAdjust="spacingAndGlyphs">RIGHT</text>
<text transform="matrix(-.08 .54 -1.300 -.2 1848.800 892.600)" font-family="Liberation Sans, sans-serif" font-weight="bold" font-size="10" fill="#d9dde0">TOP</text>
<text transform="matrix(.37 -.56 0 1 1881.900 943.800)" font-family="Liberation Sans, sans-serif" font-weight="bold" font-size="9.500" fill="#d9dde0">BACK</text>
<path d="M1290.400 953.100V947.600H1295.900M1305 947.600H1310.500V953.100M1310.500 960.100V965.600H1305M1295.900 965.600H1290.400V960.100" fill="none" stroke="#1f1f1f" stroke-width="2.350"/>
</svg>
</div>

<div id="statusbar">
  <div id="estop"><svg width="15" height="15" viewBox="0 0 15 15"><circle cx="7.500" cy="7.500" r="6.500" fill="none" stroke="#fff" stroke-width="1.400"/><rect x="4.700" y="4.700" width="5.600" height="5.600" rx="1" fill="#fff"/></svg><span>Emergency Stop</span></div>
  <div id="ip"><svg width="14" height="14" viewBox="0 0 14 14"><g fill="none" stroke="#fff" stroke-width="1.050" stroke-linecap="round" stroke-linejoin="round"><path d="M1.200 1.300L9.800 10"/><path d="M3.600 5.200C5 3.900 7 3.700 8.300 4.300L12.300 8.200V12.700H5.600C3.800 11.800 2.700 8.500 3.600 5.200Z"/><path d="M8.300 7.400L6.800 9.300M9.200 9.200L7.200 9.500"/></g></svg><span>192.168.1.12</span></div>
  <div id="bell"><svg width="18" height="20" viewBox="0 0 18 20"><g fill="none" stroke="#373c4c" stroke-width="1.050" stroke-linecap="round" stroke-linejoin="round"><path d="M3.300 14.800L3.900 7.400C3.900 4.200 5.800 2.300 8.450 2.300S13 4.200 13 7.400L13.600 14.800"/><path d="M2.500 15h11.900" stroke-width="1.250"/><circle cx="8.450" cy="16.600" r="1"/></g></svg></div>
</div>
</body></html>
